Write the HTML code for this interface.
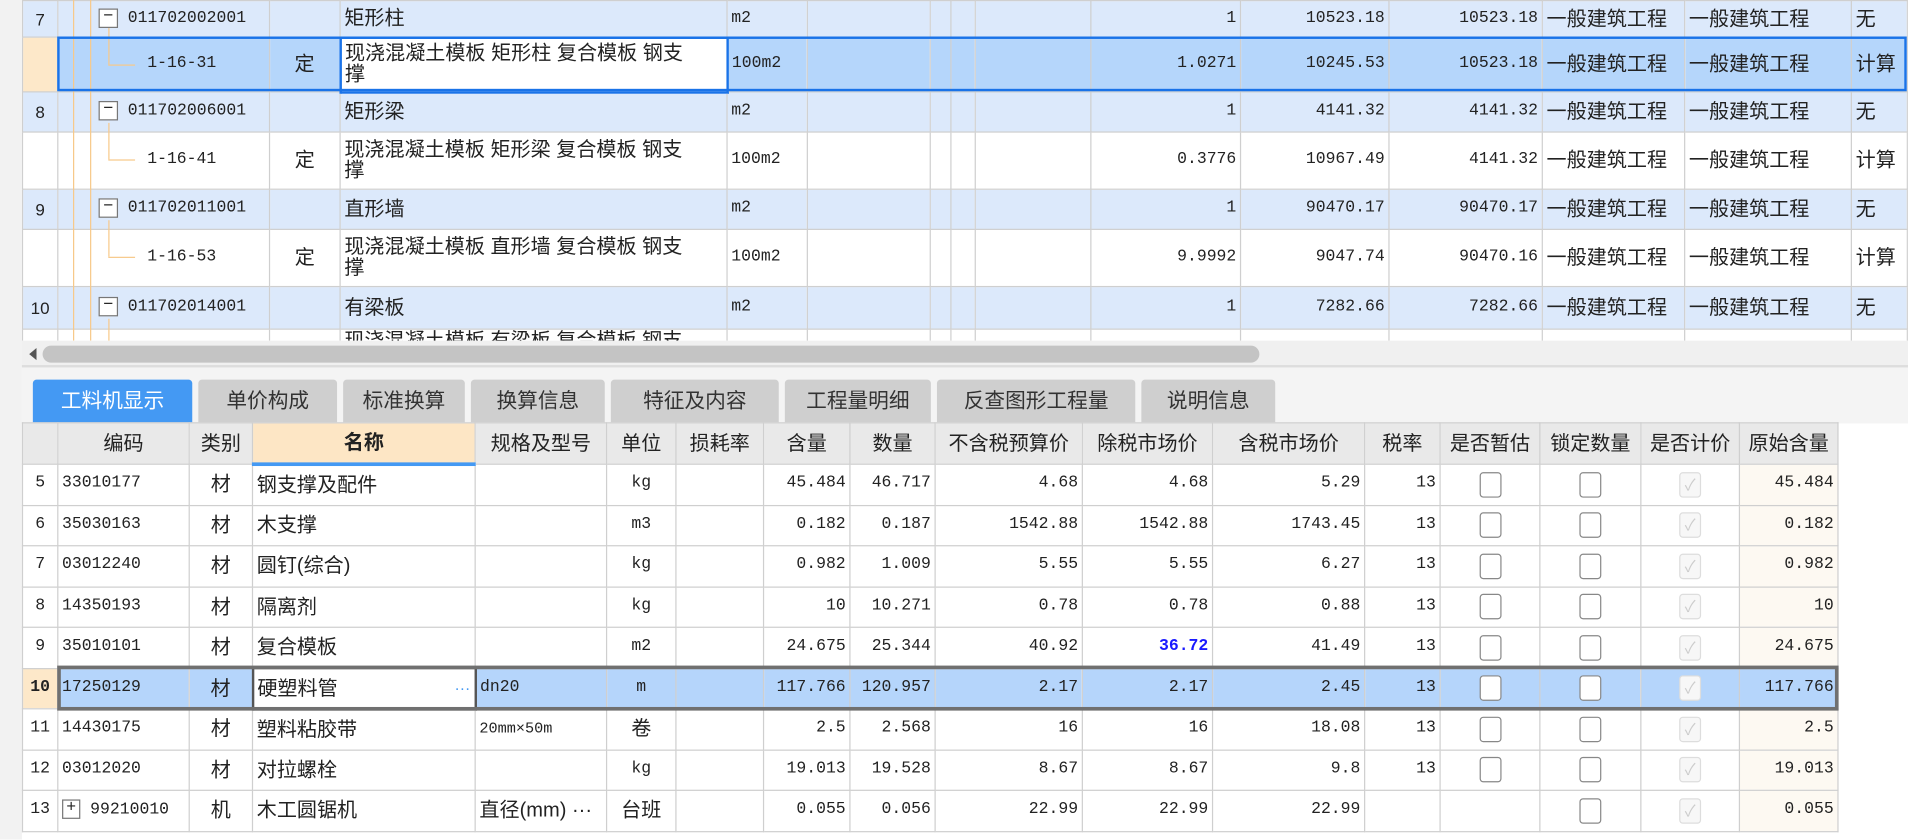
<!DOCTYPE html>
<html><head><meta charset="utf-8"><style>
*{box-sizing:border-box;margin:0;padding:0}
body{width:1908px;height:839px;overflow:hidden;background:#fff;font-family:"Liberation Sans","Noto Sans CJK SC",sans-serif;color:#222}
#w{position:absolute;left:0;top:0;width:1568px;height:690px;transform:scale(1.2168);transform-origin:0 0;background:#fff}
table{border-collapse:collapse;table-layout:fixed;position:absolute}
td{border:1px solid #cfcfcf;font-size:16.5px;line-height:18px;white-space:nowrap;overflow:hidden;padding:0 3px;vertical-align:middle}
.n{font-family:"Liberation Mono",monospace;font-size:13.5px;text-align:right}
.c{text-align:center}
.m{font-family:"Liberation Mono",monospace;font-size:13.5px}
#top tr.p td{background:#dce9fb}
#top td.rn{background:#fff;text-align:center;font-size:14px}
#top tr.s td{background:#b5d6fb}
#top tr.s td.rn{background:#fde8c9}
#top tr.s td.w{background:#fff}
.l{line-height:17px;font-size:16.5px}
.v{position:absolute;width:1px;background:#f7c98a}
.h{position:absolute;height:1px;background:#f7c98a}
.bx{position:absolute;width:16px;height:16px;border:1px solid #777;background:#fff;font-size:14px;line-height:13px;text-align:center;font-family:"Liberation Mono",monospace}
#bot td{height:33.5px}
#bot tr.hd td{background:#e9e9e9;height:34px;text-align:center;font-size:16.5px}
#bot td.o{background:#fdf9f2}
#bot tr.sel td{background:#b5d5fb}
#bot tr.sel td.rn{background:#fde8c9;font-weight:bold}
#bot tr.sel td.w{background:#fff}
.cb{display:inline-block;width:18px;height:21px;border:1px solid #888;border-radius:3px;background:#fff;vertical-align:middle}
.ck{display:inline-block;width:18px;height:21px;border:1px solid #ddd;border-radius:3px;background:#f7f7f7;color:#ccc;font-size:13px;line-height:19px;text-align:center;vertical-align:middle}
.tab{position:absolute;top:312px;height:35px;background:#cfcfcf;border-radius:3px 3px 0 0;font-size:17px;text-align:center;line-height:35px;color:#333}
</style></head><body><div id="w">
<div style="position:absolute;left:0;top:0;width:18px;height:690px;background:#f2f2f2"></div>
<div style="position:absolute;left:18px;top:0;width:1550px;height:280px;overflow:hidden">
<table id="top" style="left:0;top:0;width:1549px">
<colgroup><col style="width:29px"><col style="width:174px"><col style="width:58px"><col style="width:318px"><col style="width:66px"><col style="width:101px"><col style="width:17px"><col style="width:20px"><col style="width:95px"><col style="width:123px"><col style="width:122px"><col style="width:126px"><col style="width:117px"><col style="width:137px"><col style="width:46px"></colgroup>
<tr class="p" style="height:30px"><td class="rn">7</td><td class="m" style="padding-left:57px">011702002001</td><td></td><td>矩形柱</td><td class="m">m2</td><td></td><td></td><td></td><td></td><td class="n">1</td><td class="n">10523.18</td><td class="n">10523.18</td><td>一般建筑工程</td><td>一般建筑工程</td><td>无</td></tr>
<tr class="s" style="height:45px"><td class="rn"></td><td class="m" style="padding-left:73px">1-16-31</td><td class="c">定</td><td class="w l" style="border:2px solid #1a73e8">现浇混凝土模板 矩形柱 复合模板 钢支<br>撑</td><td class="m">100m2</td><td></td><td></td><td></td><td></td><td class="n">1.0271</td><td class="n">10245.53</td><td class="n">10523.18</td><td>一般建筑工程</td><td>一般建筑工程</td><td>计算</td></tr>
<tr class="p" style="height:33px"><td class="rn">8</td><td class="m" style="padding-left:57px">011702006001</td><td></td><td>矩形梁</td><td class="m">m2</td><td></td><td></td><td></td><td></td><td class="n">1</td><td class="n">4141.32</td><td class="n">4141.32</td><td>一般建筑工程</td><td>一般建筑工程</td><td>无</td></tr>
<tr style="height:47px"><td class="rn"></td><td class="m" style="padding-left:73px">1-16-41</td><td class="c">定</td><td class="l">现浇混凝土模板 矩形梁 复合模板 钢支<br>撑</td><td class="m">100m2</td><td></td><td></td><td></td><td></td><td class="n">0.3776</td><td class="n">10967.49</td><td class="n">4141.32</td><td>一般建筑工程</td><td>一般建筑工程</td><td>计算</td></tr>
<tr class="p" style="height:33px"><td class="rn">9</td><td class="m" style="padding-left:57px">011702011001</td><td></td><td>直形墙</td><td class="m">m2</td><td></td><td></td><td></td><td></td><td class="n">1</td><td class="n">90470.17</td><td class="n">90470.17</td><td>一般建筑工程</td><td>一般建筑工程</td><td>无</td></tr>
<tr style="height:47px"><td class="rn"></td><td class="m" style="padding-left:73px">1-16-53</td><td class="c">定</td><td class="l">现浇混凝土模板 直形墙 复合模板 钢支<br>撑</td><td class="m">100m2</td><td></td><td></td><td></td><td></td><td class="n">9.9992</td><td class="n">9047.74</td><td class="n">90470.16</td><td>一般建筑工程</td><td>一般建筑工程</td><td>计算</td></tr>
<tr class="p" style="height:35px"><td class="rn">10</td><td class="m" style="padding-left:57px">011702014001</td><td></td><td>有梁板</td><td class="m">m2</td><td></td><td></td><td></td><td></td><td class="n">1</td><td class="n">7282.66</td><td class="n">7282.66</td><td>一般建筑工程</td><td>一般建筑工程</td><td>无</td></tr>
<tr style="height:40px"><td class="rn"></td><td></td><td></td><td style="vertical-align:top">现浇混凝土模板 有梁板 复合模板 钢支</td><td></td><td></td><td></td><td></td><td></td><td></td><td></td><td></td><td></td><td></td><td></td></tr>
</table>
<div class="v" style="left:42px;top:0;height:280px"></div>
<div class="v" style="left:56px;top:0;height:280px"></div>
<div class="v" style="left:71px;top:23px;height:30px"></div><div class="h" style="left:71px;top:53px;width:22px"></div>
<div class="v" style="left:71px;top:101px;height:30px"></div><div class="h" style="left:71px;top:131px;width:22px"></div>
<div class="v" style="left:71px;top:181px;height:30px"></div><div class="h" style="left:71px;top:211px;width:22px"></div>
<div class="v" style="left:71px;top:262px;height:20px"></div>
<div style="position:absolute;left:29px;top:30px;width:1520px;height:45px;border:2px solid #1a73e8;pointer-events:none"></div>
<div class="bx" style="left:63px;top:7px">−</div>
<div class="bx" style="left:63px;top:83px">−</div>
<div class="bx" style="left:63px;top:163px">−</div>
<div class="bx" style="left:63px;top:244px">−</div>
</div>
<div style="position:absolute;left:18px;top:280px;width:1550px;height:22px;background:#f0f0f0;border-bottom:2px solid #ddd"></div>
<div style="position:absolute;left:24px;top:286px;width:0;height:0;border-top:5px solid transparent;border-bottom:5px solid transparent;border-right:6px solid #555"></div>
<div style="position:absolute;left:35px;top:284px;width:1000px;height:14px;background:#c4c4c4;border-radius:7px"></div>
<div style="position:absolute;left:18px;top:302px;width:1550px;height:46px;background:#f4f4f4"></div>
<div class="tab" style="left:27px;width:131px;background:#4499f3;color:#fff">工料机显示</div>
<div class="tab" style="left:163px;width:114px">单价构成</div>
<div class="tab" style="left:282px;width:100px">标准换算</div>
<div class="tab" style="left:387px;width:110px">换算信息</div>
<div class="tab" style="left:502px;width:138px">特征及内容</div>
<div class="tab" style="left:645px;width:120px">工程量明细</div>
<div class="tab" style="left:770px;width:163px">反查图形工程量</div>
<div class="tab" style="left:938px;width:110px">说明信息</div>
<table id="bot" style="left:18px;top:347px;width:1492px">
<colgroup><col style="width:29px"><col style="width:108px"><col style="width:52px"><col style="width:183px"><col style="width:108px"><col style="width:57px"><col style="width:72px"><col style="width:71px"><col style="width:70px"><col style="width:121px"><col style="width:107px"><col style="width:125px"><col style="width:62px"><col style="width:82px"><col style="width:83px"><col style="width:81px"><col style="width:81px"></colgroup>
<tr class="hd"><td></td><td>编码</td><td>类别</td><td style="background:#fde6c5;font-weight:bold;border-bottom:3px solid #4499f3">名称</td><td>规格及型号</td><td>单位</td><td>损耗率</td><td>含量</td><td>数量</td><td>不含税预算价</td><td>除税市场价</td><td>含税市场价</td><td>税率</td><td>是否暂估</td><td>锁定数量</td><td>是否计价</td><td>原始含量</td></tr>
<tr><td class="c m rn">5</td><td class="m">33010177</td><td class="c">材</td><td>钢支撑及配件</td><td></td><td class="c m">kg</td><td></td><td class="n">45.484</td><td class="n">46.717</td><td class="n">4.68</td><td class="n">4.68</td><td class="n">5.29</td><td class="n">13</td><td class="c"><span class="cb"></span></td><td class="c"><span class="cb"></span></td><td class="c"><span class="ck">✓</span></td><td class="n o">45.484</td></tr>
<tr><td class="c m rn">6</td><td class="m">35030163</td><td class="c">材</td><td>木支撑</td><td></td><td class="c m">m3</td><td></td><td class="n">0.182</td><td class="n">0.187</td><td class="n">1542.88</td><td class="n">1542.88</td><td class="n">1743.45</td><td class="n">13</td><td class="c"><span class="cb"></span></td><td class="c"><span class="cb"></span></td><td class="c"><span class="ck">✓</span></td><td class="n o">0.182</td></tr>
<tr><td class="c m rn">7</td><td class="m">03012240</td><td class="c">材</td><td>圆钉(综合)</td><td></td><td class="c m">kg</td><td></td><td class="n">0.982</td><td class="n">1.009</td><td class="n">5.55</td><td class="n">5.55</td><td class="n">6.27</td><td class="n">13</td><td class="c"><span class="cb"></span></td><td class="c"><span class="cb"></span></td><td class="c"><span class="ck">✓</span></td><td class="n o">0.982</td></tr>
<tr><td class="c m rn">8</td><td class="m">14350193</td><td class="c">材</td><td>隔离剂</td><td></td><td class="c m">kg</td><td></td><td class="n">10</td><td class="n">10.271</td><td class="n">0.78</td><td class="n">0.78</td><td class="n">0.88</td><td class="n">13</td><td class="c"><span class="cb"></span></td><td class="c"><span class="cb"></span></td><td class="c"><span class="ck">✓</span></td><td class="n o">10</td></tr>
<tr><td class="c m rn">9</td><td class="m">35010101</td><td class="c">材</td><td>复合模板</td><td></td><td class="c m">m2</td><td></td><td class="n">24.675</td><td class="n">25.344</td><td class="n">40.92</td><td class="n" style="color:#1a1aff;font-weight:bold">36.72</td><td class="n">41.49</td><td class="n">13</td><td class="c"><span class="cb"></span></td><td class="c"><span class="cb"></span></td><td class="c"><span class="ck">✓</span></td><td class="n o">24.675</td></tr>
<tr class="sel"><td class="c m rn">10</td><td class="m">17250129</td><td class="c">材</td><td class="w" style="border:2px solid #555">硬塑料管<span style="float:right;color:#4499f3;font-size:13px">···</span></td><td class="m">dn20</td><td class="c m">m</td><td></td><td class="n">117.766</td><td class="n">120.957</td><td class="n">2.17</td><td class="n">2.17</td><td class="n">2.45</td><td class="n">13</td><td class="c"><span class="cb"></span></td><td class="c"><span class="cb"></span></td><td class="c"><span class="ck">✓</span></td><td class="n">117.766</td></tr>
<tr><td class="c m rn">11</td><td class="m">14430175</td><td class="c">材</td><td>塑料粘胶带</td><td class="m" style="font-size:12.5px">20mm×50m</td><td class="c">卷</td><td></td><td class="n">2.5</td><td class="n">2.568</td><td class="n">16</td><td class="n">16</td><td class="n">18.08</td><td class="n">13</td><td class="c"><span class="cb"></span></td><td class="c"><span class="cb"></span></td><td class="c"><span class="ck">✓</span></td><td class="n o">2.5</td></tr>
<tr><td class="c m rn">12</td><td class="m">03012020</td><td class="c">材</td><td>对拉螺栓</td><td></td><td class="c m">kg</td><td></td><td class="n">19.013</td><td class="n">19.528</td><td class="n">8.67</td><td class="n">8.67</td><td class="n">9.8</td><td class="n">13</td><td class="c"><span class="cb"></span></td><td class="c"><span class="cb"></span></td><td class="c"><span class="ck">✓</span></td><td class="n o">19.013</td></tr>
<tr><td class="c m rn">13</td><td class="m"><span style="display:inline-block;width:15px;height:16px;border:1px solid #777;text-align:center;line-height:14px;vertical-align:middle">+</span> 99210010</td><td class="c">机</td><td>木工圆锯机</td><td>直径(mm) ···</td><td class="c">台班</td><td></td><td class="n">0.055</td><td class="n">0.056</td><td class="n">22.99</td><td class="n">22.99</td><td class="n">22.99</td><td class="n"></td><td class="c"></td><td class="c"><span class="cb"></span></td><td class="c"><span class="ck">✓</span></td><td class="n o">0.055</td></tr>
</table>
<div style="position:absolute;left:47px;top:547px;width:1464px;height:37px;border:3px solid #707070;pointer-events:none"></div>
</div></body></html>
